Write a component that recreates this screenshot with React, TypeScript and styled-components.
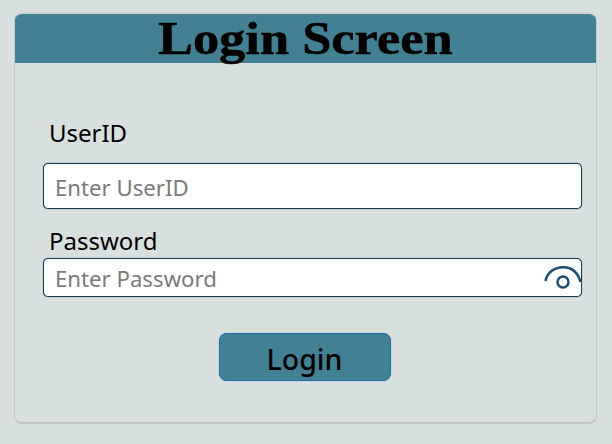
import React from 'react';
import styled, { createGlobalStyle } from 'styled-components';

const GlobalStyle = createGlobalStyle`
  html, body {
    margin: 0;
    padding: 0;
    background: #d8dfdf;
  }
`;

const Page = styled.div`
  width: 612px;
  height: 444px;
  padding: 12px 15px 20px 14px;
  box-sizing: border-box;
  font-family: "Noto Sans", "Open Sans", sans-serif;
`;

const Card = styled.div`
  height: 100%;
  box-sizing: border-box;
  border: 1px solid #c4caca;
  border-top: 2px solid #cfd5d5;
  border-bottom: 2px solid #c0c5c6;
  border-radius: 8px;
  overflow: hidden;
`;

const Header = styled.div`
  height: 49px;
  background: #428093;
  display: flex;
  align-items: center;
  justify-content: center;
`;

const Title = styled.h1`
  margin: 0;
  font-family: "Liberation Serif", serif;
  font-weight: 700;
  font-size: 46px;
  line-height: 49px;
  color: #000;
  -webkit-text-stroke: 0.5px #000;
  transform: scaleX(1.14);
`;

const Form = styled.form`
  display: flex;
  flex-direction: column;
  padding: 0 14px 0 28px;
`;

const Label = styled.label<{ $top: number; $height: number }>`
  display: block;
  margin-top: ${(p) => p.$top}px;
  height: ${(p) => p.$height}px;
  padding-left: 6px;
  font-size: 24px;
  line-height: 33px;
  color: #000;
`;

const InputWrap = styled.div<{ $height: number }>`
  position: relative;
  height: ${(p) => p.$height}px;
`;

const Input = styled.input`
  width: 100%;
  height: 100%;
  box-sizing: border-box;
  padding: 2px 11px 0;
  background: #fff;
  border: 1px solid #173f5a;
  border-radius: 5px;
  box-shadow: 0 0 1px #173f5a;
  font-family: inherit;
  font-size: 22.2px;
  color: #000;
  outline: none;

  &::placeholder {
    color: #7a7a7a;
    opacity: 1;
  }
`;

const EyeIcon = styled.svg`
  position: absolute;
  right: 0;
  top: 8px;
`;

const Submit = styled.button`
  align-self: center;
  margin: 36px 0 0 -16px;
  width: 172px;
  height: 48px;
  background: #428093;
  border: 1px solid #2a70a8;
  border-radius: 8px;
  box-shadow: 0 0 1px #2a70a8;
  font-family: inherit;
  font-size: 28.5px;
  font-weight: 500;
  line-height: 44px;
  padding: 3px 0 0;
  color: #000;
`;

export default function App() {
  return (
    <Page>
      <GlobalStyle />
      <Card>
        <Header>
          <Title>Login Screen</Title>
        </Header>
        <Form>
          <Label $top={53} $height={47}>UserID</Label>
          <InputWrap $height={46}>
            <Input placeholder="Enter UserID" />
          </InputWrap>
          <Label $top={15} $height={34}>Password</Label>
          <InputWrap $height={39}>
            <Input placeholder="Enter Password" />
            <EyeIcon width="38" height="26" viewBox="0 0 38 26" fill="none" stroke="#1d4f75" strokeWidth="2.5">
              <path d="M1.5 15 C3 7 10 1.2 19 1.2 C28 1.2 34 7 36.5 16" />
              <circle cx="19" cy="16" r="5.5" />
            </EyeIcon>
          </InputWrap>
          <Submit type="button">Login</Submit>
        </Form>
      </Card>
    </Page>
  );
}
